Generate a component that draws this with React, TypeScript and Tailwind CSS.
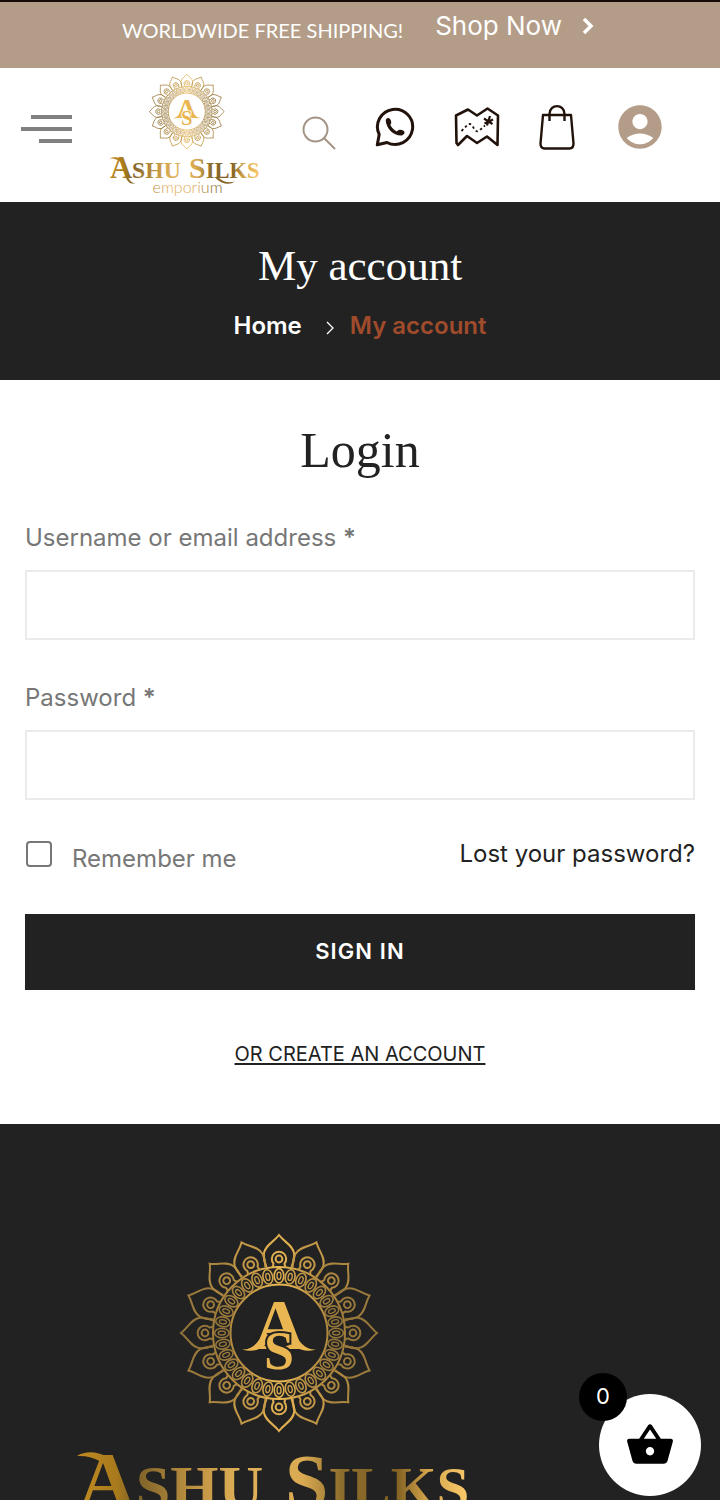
import { useState } from 'react';
import { MdAccountCircle, MdShoppingBasket } from 'react-icons/md';

const petals = Array.from({ length: 16 }, (_, i) => i * 22.5);
const beads = Array.from({ length: 32 }, (_, i) => i * 11.25);

// side petals are darker than the ones on the vertical axis
function petalColor(angle: number) {
    const side = Math.abs(Math.sin((angle * Math.PI) / 180));
    const mix = (a: number, b: number) => Math.round(a + (b - a) * side);
    return `rgb(${mix(222, 148)}, ${mix(174, 117)}, ${mix(80, 58)})`;
}

function Logo({ id, background, className }: { id: string; background: string; className: string }) {
    const gold = `url(#${id}-gold)`;
    const word = `url(#${id}-word)`;

    return (
        <svg viewBox="0 0 390 324" className={className} role="img" aria-label="Ashu Silks emporium">
            <defs>
                <linearGradient id={`${id}-gold`} gradientUnits="userSpaceOnUse" x1="-98" y1="0" x2="98" y2="0">
                    <stop offset="0" stopColor="#836630" />
                    <stop offset="0.3" stopColor="#b98f42" />
                    <stop offset="0.5" stopColor="#e9b954" />
                    <stop offset="0.7" stopColor="#b98f42" />
                    <stop offset="1" stopColor="#836630" />
                </linearGradient>
                <linearGradient id={`${id}-word`} gradientUnits="userSpaceOnUse" x1="0" y1="0" x2="388" y2="0">
                    <stop offset="0" stopColor="#c08a22" />
                    <stop offset="0.1" stopColor="#a87a1c" />
                    <stop offset="0.15" stopColor="#7d6128" />
                    <stop offset="0.28" stopColor="#b78c3e" />
                    <stop offset="0.42" stopColor="#e0b158" />
                    <stop offset="0.58" stopColor="#d9aa52" />
                    <stop offset="0.68" stopColor="#8d6d2c" />
                    <stop offset="0.82" stopColor="#7f6022" />
                    <stop offset="0.9" stopColor="#d3a34a" />
                    <stop offset="1" stopColor="#f8c869" />
                </linearGradient>
            </defs>

            <g transform="translate(201 101)" fill="none" stroke={gold} strokeWidth="2">
                <circle r="66" />
                <circle r="48.5" />
                {petals.map((angle) => (
                    <g key={angle} transform={`rotate(${angle})`} stroke={petalColor(angle)}>
                        <path d="M-12.5 -66C-14.5 -70 -15.5 -74 -15.2 -79C-14 -88 -5 -91 0 -98C5 -91 14 -88 15.2 -79C15.5 -74 14.5 -70 12.5 -66" />
                        <path d="M-6.5 -66C-5.5 -68 -5.5 -69 -5.5 -69.5A7.2 7.2 0 1 1 5.5 -69.5C5.5 -69 5.5 -68 6.5 -66" />
                        <circle cy="-74" r="3.4" />
                    </g>
                ))}
                {beads.map((angle) => (
                    <g key={angle} transform={`rotate(${angle})`} stroke={petalColor(angle)}>
                        <ellipse cy="-57.2" rx="4.8" ry="7.2" strokeWidth="1.6" />
                        <ellipse cy="-57.2" rx="2" ry="3.6" strokeWidth="1.3" />
                    </g>
                ))}
            </g>

            {/* monogram */}
            <g fill="#e9b652" fontFamily="'Liberation Serif', serif">
                <text x="201" y="117" fontSize="72" fontWeight="bold" textAnchor="middle">A</text>
                <path d="M186 98C181 111 174 118 164 117.5C176 121 187 117 192 106Z" />
                <path d="M215 98C221 111 228 118 238 117.5C226 121 215 117 210 104Z" />
                <text
                    x="201"
                    y="137"
                    fontSize="54"
                    fontWeight="bold"
                    textAnchor="middle"
                    stroke={background}
                    strokeWidth="4"
                    paintOrder="stroke"
                >
                    S
                </text>
            </g>

            <g fill={word} fontFamily="'Liberation Serif', serif" fontWeight="bold">
                <text x="0" y="276" fontSize="62">
                    <tspan fontSize="80">A</tspan>SHU
                </text>
                <text x="207" y="276" fontSize="59">
                    <tspan fontSize="78">S</tspan>ILKS
                </text>
                {/* swashes */}
                <path d="M-1 224C7 219 19 219 29 225L37 241C27 230 14 223 -1 224Z" />
                <path d="M47 270C51 282 56 287 66 288C57 292 46 287 41 272Z" />
                <path d="M283 272C293 284 310 289 326 284C314 294 293 291 277 276Z" />
            </g>
            <text x="203" y="313" fontSize="42" fontWeight="300" fontFamily="Lato, sans-serif" textAnchor="middle" fill={word}>
                emporium
            </text>
        </svg>
    );
}

function SearchIcon() {
    return (
        <svg viewBox="0 0 34 34" className="w-[34px] h-[34px]" fill="none" stroke="#a39485" strokeWidth="2">
            <circle cx="13.5" cy="13.5" r="12" />
            <path d="M22 22L33 33" />
        </svg>
    );
}

function WhatsappIcon() {
    return (
        <svg viewBox="0 0 40 40" className="w-10 h-10">
            <path
                d="M2.3 37.8L4.2 27.5A17.6 17.6 0 1 1 12 35.5Z"
                fill="none"
                stroke="#21130b"
                strokeWidth="3"
                strokeLinejoin="round"
            />
            <path
                d="M10.8 14C10.5 11.5 13 10 14.6 11.5C16.3 13.5 17 16 15.3 18C16.8 21 19 23 21.8 24.5C23.5 22.3 26.5 22.5 28.8 24C30.5 25.5 29 28 26.5 28.5C19 29 11.5 22 10.8 14Z"
                fill="#21130b"
            />
        </svg>
    );
}

function MapIcon() {
    return (
        <svg viewBox="0 0 46 40" className="w-[46px] h-10" fill="none" stroke="#21130b" strokeWidth="2.6" strokeLinejoin="round">
            <path d="M2 8.5L14 2.5L23 8.5L33.5 1.5L44 8.5L43.5 38L33 29.500L23 36L13 29L4 38L2.500 36Z" />
            <path d="M7.5 24L14 17.500Q16.500 16 18.500 19L20.500 22.500Q23 26 26 23L31 18.500" strokeWidth="1.8" strokeDasharray="2.5 2.5" />
            <path d="M30 11.5L38.5 17M36 9L33 18.5M30.5 16.500L39 12.5" strokeWidth="2.2" />
        </svg>
    );
}

function BagIcon() {
    return (
        <svg viewBox="0 0 36 46" className="w-9 h-[46px]" fill="none" stroke="#21130b" strokeWidth="2.4" strokeLinejoin="round">
            <path d="M4 11H32L34.500 39.5Q34.500 44.5 30.500 44.5H5.500Q1.500 44.5 1.500 39.5Z" />
            <path d="M10.5 17V10C10.5 -0.5 25.5 -0.5 25.5 10V17" />
        </svg>
    );
}

export default function MyAccount() {
    const [username, setUsername] = useState('');
    const [password, setPassword] = useState('');
    const [remember, setRemember] = useState(false);

    return (
        <div className="min-h-screen flex flex-col bg-white font-['Inter',sans-serif] text-[#222222]">
            {/* Announcement */}
            <div className="flex justify-center items-start bg-[#b39d88] border-t-2 border-[#160a0a] text-white pt-2 pb-5 pr-1">
                <p className="font-['Lato',sans-serif] text-xl leading-9 pt-0.5">WORLDWIDE FREE SHIPPING!</p>
                <a href="#" className="flex items-center ml-8 text-[26px] leading-8">
                    Shop Now
                    <svg viewBox="0 0 12 18" className="w-3 h-[18px] ml-5" fill="none" stroke="currentColor" strokeWidth="3.5">
                        <path d="M2 2L9 9L2 16" />
                    </svg>
                </a>
            </div>

            <header className="flex items-center pl-[21px] pr-[54px] py-[5px]">
                <button type="button" aria-label="Menu" className="flex flex-col items-end gap-2 w-[51px] shrink-0 mb-3">
                    <span className="w-[41px] h-1 bg-[#808080]" />
                    <span className="w-full h-1 bg-[#808080]" />
                    <span className="w-[33px] h-1 bg-[#808080]" />
                </button>
                <a href="#" className="ml-[38px] shrink-0">
                    <Logo id="top" background="#ffffff" className="w-[149px] overflow-visible" />
                </a>
                <nav className="flex flex-1 items-center justify-between ml-[43px] mb-4">
                    <button type="button" aria-label="Search" className="mt-3"><SearchIcon /></button>
                    <a href="#" aria-label="WhatsApp"><WhatsappIcon /></a>
                    <a href="#" aria-label="Store map"><MapIcon /></a>
                    <a href="#" aria-label="Bag"><BagIcon /></a>
                    <a href="#" aria-label="Account"><MdAccountCircle className="w-[52px] h-[52px] text-[#b39d88]" /></a>
                </nav>
            </header>

            {/* Page title */}
            <section className="bg-[#222222] text-white text-center pt-[34px] pb-9">
                <h1 className="font-['Liberation_Serif',serif] text-[43px] leading-[60px]">My account</h1>
                <nav aria-label="Breadcrumb" className="flex justify-center items-center mt-3 text-2xl leading-9 font-semibold">
                    <a href="#">Home</a>
                    <svg viewBox="0 0 8 14" className="w-2 h-3.5 ml-6 mr-4 mt-1" fill="none" stroke="currentColor" strokeWidth="1.3">
                        <path d="M1 1L7 7L1 13" />
                    </svg>
                    <span className="text-[#a04b2b]">My account</span>
                </nav>
            </section>

            <main className="px-[25px] pt-9 pb-[54px]">
                <h2 className="font-['Liberation_Serif',serif] text-[50px] leading-[68px] text-center">Login</h2>
                <form onSubmit={(e) => e.preventDefault()} className="mt-9 text-2xl">
                    <label htmlFor="username" className="block leading-9 text-[#777777]">
                        Username or email address <b className="font-semibold">*</b>
                    </label>
                    <input
                        id="username"
                        type="text"
                        value={username}
                        onChange={(e) => setUsername(e.target.value)}
                        className="block w-full h-[70px] mt-3.5 px-5 border-2 border-[#ebebeb] outline-none"
                    />
                    <label htmlFor="password" className="block mt-10 leading-9 text-[#777777]">
                        Password <b className="font-semibold">*</b>
                    </label>
                    <input
                        id="password"
                        type="password"
                        value={password}
                        onChange={(e) => setPassword(e.target.value)}
                        className="block w-full h-[70px] mt-3.5 px-5 border-2 border-[#ebebeb] outline-none"
                    />
                    <div className="flex justify-between items-start mt-9 leading-9">
                        <div className="flex items-start">
                            <input
                                id="remember"
                                type="checkbox"
                                checked={remember}
                                onChange={(e) => setRemember(e.target.checked)}
                                className="appearance-none w-[26px] h-[26px] mt-[5px] ml-px mr-5 border-2 border-[#777777] rounded checked:bg-[#777777]"
                            />
                            <label htmlFor="remember" className="mt-[5px] text-[#777777]">Remember me</label>
                        </div>
                        <a href="#">Lost your password?</a>
                    </div>
                    <button
                        type="submit"
                        className="block w-full h-[76px] mt-[37px] bg-[#222222] text-white text-[22px] font-semibold tracking-wider"
                    >
                        SIGN IN
                    </button>
                </form>
                <p className="mt-12 text-center text-xl leading-8">
                    <a href="#" className="underline underline-offset-2 decoration-2">OR CREATE AN ACCOUNT</a>
                </p>
            </main>

            <footer className="grow bg-[#222222] pt-[108px] pl-[78px] pb-10">
                <Logo id="bottom" background="#222222" className="w-[390px] overflow-visible" />
            </footer>

            {/* Floating cart */}
            <button
                type="button"
                aria-label="Open cart"
                className="fixed right-[19px] bottom-1 flex items-center justify-center w-[102px] h-[102px] rounded-full bg-white text-black"
            >
                <MdShoppingBasket className="w-[50px] h-[50px]" />
                <span className="absolute -left-5 -top-[21px] flex items-center justify-center w-12 h-12 pb-0.5 rounded-full bg-black text-white text-[22px]">
                    0
                </span>
            </button>
        </div>
    );
}
